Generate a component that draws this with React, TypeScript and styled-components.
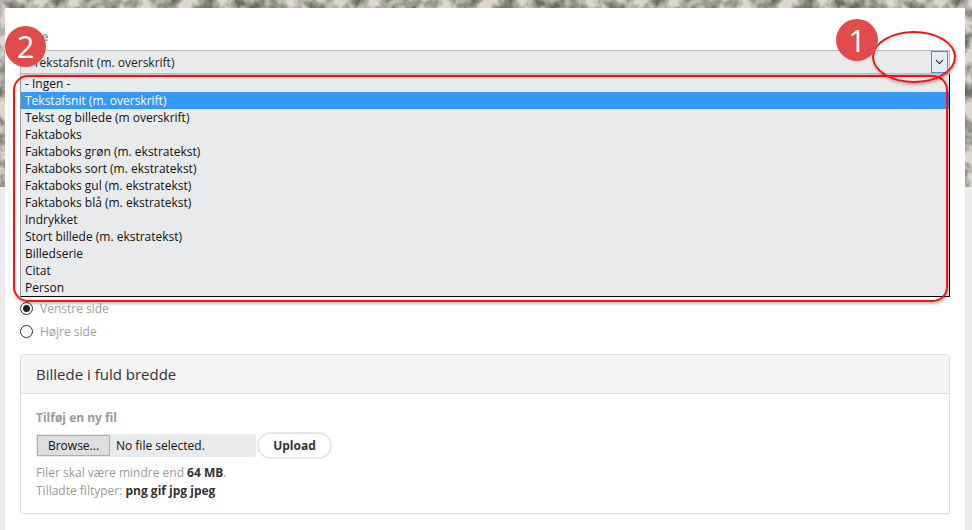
import React from "react";
import styled, { createGlobalStyle } from "styled-components";

const noise = `url("data:image/svg+xml;utf8,<svg xmlns='http://www.w3.org/2000/svg' width='300' height='300'><filter id='n'><feTurbulence type='fractalNoise' baseFrequency='0.06' numOctaves='5' seed='3'/><feColorMatrix type='matrix' values='0 0 0 0 0  0 0 0 0 0  0 0 0 0 0  -1.3 0 0 0 0.85'/></filter><rect width='100%' height='100%' fill='%23dcd8d0'/><rect width='100%' height='100%' fill='%23575349' filter='url(%23n)'/></svg>")`;

const GlobalStyle = createGlobalStyle`
  html, body { margin: 0; padding: 0; }
  body {
    background: #e9ebec;
    font-family: "Open Sans", "Noto Sans", sans-serif;
    color: #333;
  }
`;

const Backdrop = styled.div`
  position: relative;
  width: 972px;
  height: 530px;
  overflow: hidden;
  box-sizing: border-box;
  padding: 8px 7px 0 5px;
  background:
    linear-gradient(#e9ebec, #e9ebec) 0 187px / 100% 100% no-repeat,
    ${noise} 0 0 / 300px 300px repeat;
`;

const Page = styled.div`
  background: #fff;
  height: 100%;
  box-sizing: border-box;
  padding: 21px 15px 0 15px;
`;

const FieldLabel = styled.div`
  font-size: 12px;
  line-height: 16px;
  font-weight: 700;
  color: #999;
  margin-bottom: 5px;
`;

const SelectBox = styled.div`
  display: flex;
  align-items: center;
  height: 24px;
  box-sizing: border-box;
  border: 1px solid #b9bdc0;
  background: #e8eaeb;
  padding-left: 12px;
  font-size: 12px;
  color: #222;
`;

const SelectValue = styled.span`
  flex: 1;
`;

const ArrowButton = styled.span`
  display: flex;
  align-items: center;
  justify-content: center;
  width: 17px;
  height: 22px;
  box-sizing: border-box;
  border: 1px solid #3c8fdc;
  background: #e3eef8;
  margin-right: 1px;
`;

const ListBox = styled.ul`
  list-style: none;
  margin: 0;
  padding: 0;
  background: #e8eaeb;
  border-top: 1px solid #c9cdd0;
  border-left: 1px solid #9a9a9a;
  border-right: 1px solid #000;
  border-bottom: 1px solid #000;
`;

const Option = styled.li<{ $selected?: boolean }>`
  height: 17px;
  line-height: 17px;
  padding-left: 4px;
  font-size: 12px;
  color: ${(p) => (p.$selected ? "#fff" : "#111")};
  background: ${(p) => (p.$selected ? "#3399ff" : "transparent")};
  white-space: nowrap;
`;

const RadioGroup = styled.div`
  display: flex;
  flex-direction: column;
`;

const RadioRow = styled.label`
  display: flex;
  align-items: center;
  height: 23px;
  gap: 7px;
  font-size: 12px;
  color: #a0a0a0;
`;

const RadioDot = styled.span<{ $checked?: boolean }>`
  width: 13px;
  height: 13px;
  box-sizing: border-box;
  border-radius: 50%;
  border: 1px solid #333;
  background: #fff;
  display: flex;
  align-items: center;
  justify-content: center;
  &::after {
    content: "";
    display: ${(p) => (p.$checked ? "block" : "none")};
    width: 7px;
    height: 7px;
    border-radius: 50%;
    background: #222;
  }
`;

const Panel = styled.section`
  margin-top: 11px;
  border: 1px solid #dedede;
  border-radius: 3px;
  box-shadow: 0 1px 1px rgba(0, 0, 0, 0.04);
`;

const PanelHeader = styled.div`
  height: 38px;
  display: flex;
  align-items: center;
  padding-left: 15px;
  background: #f4f4f4;
  border-bottom: 1px solid #dedede;
  font-size: 15px;
  color: #333;
`;

const PanelBody = styled.div`
  padding: 16px 15px 13px 15px;
`;

const SubLabel = styled.div`
  font-size: 12px;
  line-height: 16px;
  font-weight: 700;
  color: #999;
  margin-bottom: 5px;
`;

const FileRow = styled.div`
  display: flex;
  align-items: center;
  height: 28px;
  gap: 1px;
`;

const FileInput = styled.div`
  display: flex;
  align-items: center;
  width: 220px;
  height: 23px;
  background: #e8eaeb;
  border-radius: 2px;
  font-size: 12px;
  color: #111;
`;

const BrowseButton = styled.span`
  display: flex;
  align-items: center;
  justify-content: center;
  height: 21px;
  width: 73px;
  box-sizing: border-box;
  margin-left: 1px;
  background: #dedede;
  border: 1px solid #adadad;
  font-size: 12px;
  color: #111;
`;

const FileName = styled.span`
  margin-left: 6px;
`;

const UploadButton = styled.button`
  height: 27px;
  width: 75px;
  border-radius: 14px;
  border: 2px solid #e6e6e6;
  background: #fff;
  font-family: "Open Sans", "Noto Sans", sans-serif;
  font-weight: 700;
  font-size: 12px;
  color: #333;
  padding: 0;
`;

const Help = styled.div`
  margin-top: 5px;
  font-size: 12px;
  line-height: 18px;
  color: #999;
  b {
    color: #333;
  }
`;

const Outline = styled.div<{ $l: number; $t: number; $w: number; $h: number; $r: string }>`
  position: absolute;
  left: ${(p) => p.$l}px;
  top: ${(p) => p.$t}px;
  width: ${(p) => p.$w}px;
  height: ${(p) => p.$h}px;
  box-sizing: border-box;
  border: 2px solid #ff1010;
  border-radius: ${(p) => p.$r};
  box-shadow: 1px 2px 3px rgba(0, 0, 0, 0.25);
  pointer-events: none;
`;

const Badge = styled.div<{ $l: number; $t: number; $d: number }>`
  position: absolute;
  left: ${(p) => p.$l}px;
  top: ${(p) => p.$t}px;
  width: ${(p) => p.$d}px;
  height: ${(p) => p.$d}px;
  border-radius: 50%;
  background: #e24b4b;
  color: #fff;
  display: flex;
  align-items: center;
  justify-content: center;
  font-family: "Open Sans", "Noto Sans", sans-serif;
  font-size: 31px;
  line-height: 1;
`;

const options = [
  "- Ingen -",
  "Tekstafsnit (m. overskrift)",
  "Tekst og billede (m overskrift)",
  "Faktaboks",
  "Faktaboks grøn (m. ekstratekst)",
  "Faktaboks sort (m. ekstratekst)",
  "Faktaboks gul (m. ekstratekst)",
  "Faktaboks blå (m. ekstratekst)",
  "Indrykket",
  "Stort billede (m. ekstratekst)",
  "Billedserie",
  "Citat",
  "Person",
];

export default function App() {
  return (
    <>
      <GlobalStyle />
      <Backdrop>
        <Page>
          <FieldLabel>Type</FieldLabel>
          <SelectBox>
            <SelectValue>Tekstafsnit (m. overskrift)</SelectValue>
            <ArrowButton>
              <svg width="9" height="6" viewBox="0 0 9 6">
                <path d="M1 1.2 L4.5 4.6 L8 1.2" fill="none" stroke="#222" strokeWidth="1.1" />
              </svg>
            </ArrowButton>
          </SelectBox>
          <ListBox>
            {options.map((o, i) => (
              <Option key={o} $selected={i === 1}>
                {o}
              </Option>
            ))}
          </ListBox>
          <RadioGroup>
            <RadioRow>
              <RadioDot $checked />
              Venstre side
            </RadioRow>
            <RadioRow>
              <RadioDot />
              Højre side
            </RadioRow>
          </RadioGroup>
          <Panel>
            <PanelHeader>Billede i fuld bredde</PanelHeader>
            <PanelBody>
              <SubLabel>Tilføj en ny fil</SubLabel>
              <FileRow>
                <FileInput>
                  <BrowseButton>Browse...</BrowseButton>
                  <FileName>No file selected.</FileName>
                </FileInput>
                <UploadButton>Upload</UploadButton>
              </FileRow>
              <Help>
                Filer skal være mindre end <b>64 MB</b>.
                <br />
                Tilladte filtyper: <b>png gif jpg jpeg</b>
              </Help>
            </PanelBody>
          </Panel>
        </Page>
        <Outline $l={13} $t={75} $w={935} $h={227} $r="15px" />
        <Outline $l={872} $t={31} $w={84} $h={52} $r="50%" />
        <Badge $l={836} $t={19} $d={42}>1</Badge>
        <Badge $l={5} $t={26} $d={41}>2</Badge>
      </Backdrop>
    </>
  );
}
